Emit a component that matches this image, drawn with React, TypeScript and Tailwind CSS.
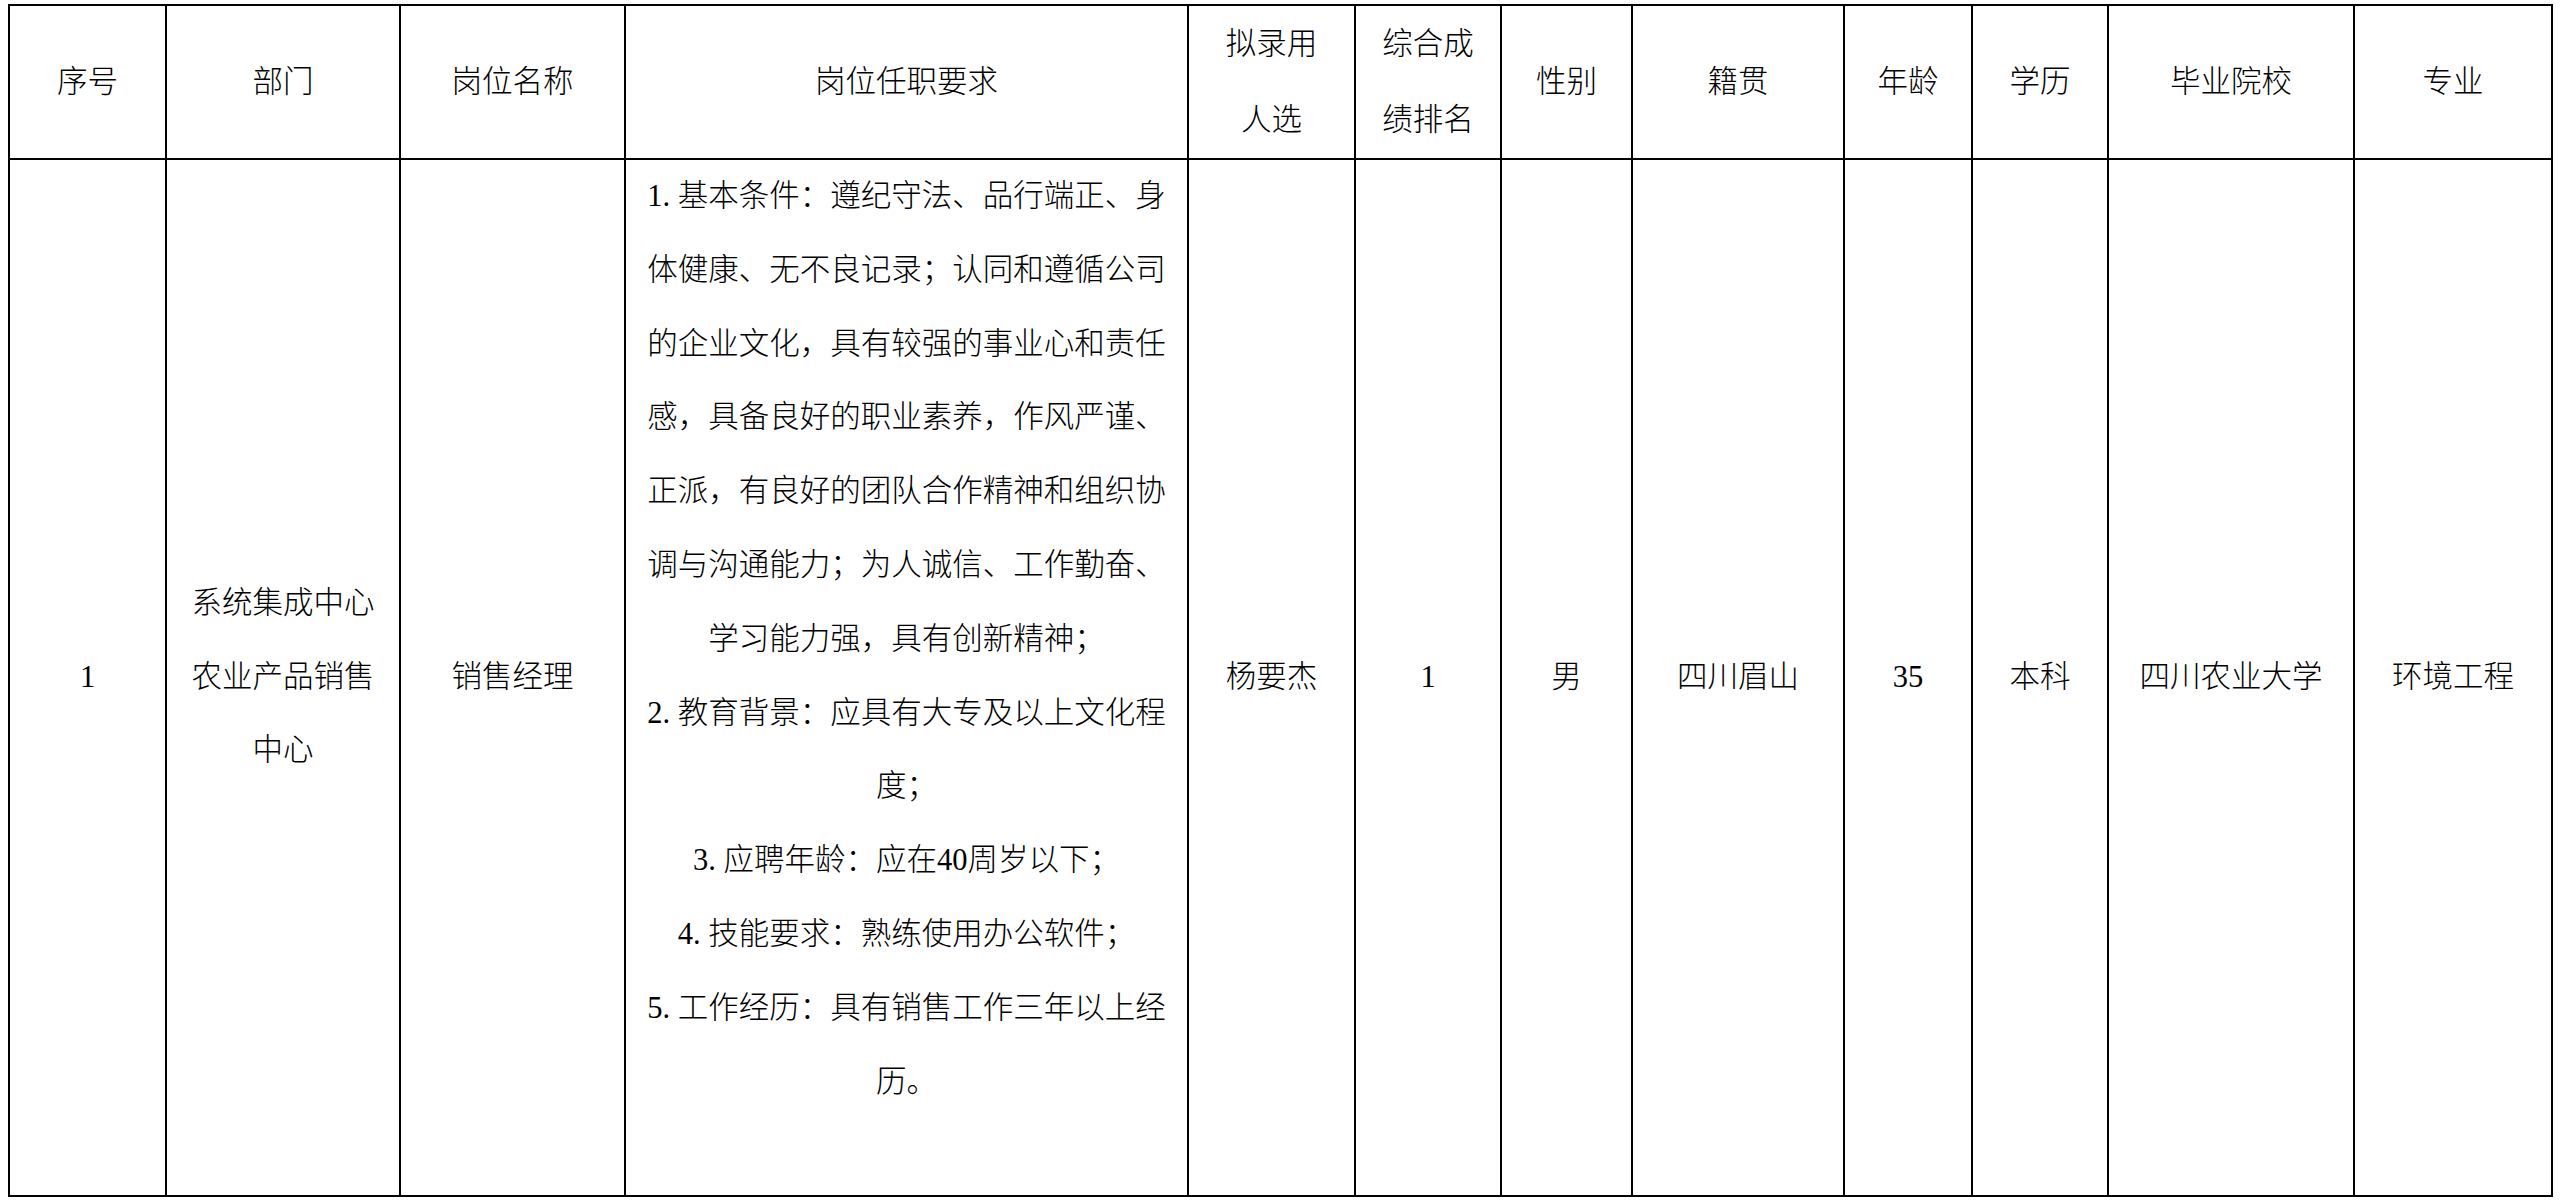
const headers: string[][] = [
  ['序号'],
  ['部门'],
  ['岗位名称'],
  ['岗位任职要求'],
  ['拟录用', '人选'],
  ['综合成', '绩排名'],
  ['性别'],
  ['籍贯'],
  ['年龄'],
  ['学历'],
  ['毕业院校'],
  ['专业'],
]

// Line breaks follow the source document so wrapping doesn't depend on font metrics
const requirements = [
  '1. 基本条件：遵纪守法、品行端正、身',
  '体健康、无不良记录；认同和遵循公司',
  '的企业文化，具有较强的事业心和责任',
  '感，具备良好的职业素养，作风严谨、',
  '正派，有良好的团队合作精神和组织协',
  '调与沟通能力；为人诚信、工作勤奋、',
  '学习能力强，具有创新精神；',
  '2. 教育背景：应具有大专及以上文化程',
  '度；',
  '3. 应聘年龄：应在40周岁以下；',
  '4. 技能要求：熟练使用办公软件；',
  '5. 工作经历：具有销售工作三年以上经',
  '历。',
]

const row: (string[] | 'req')[] = [
  ['1'],
  ['系统集成中心', '农业产品销售', '中心'],
  ['销售经理'],
  'req',
  ['杨要杰'],
  ['1'],
  ['男'],
  ['四川眉山'],
  ['35'],
  ['本科'],
  ['四川农业大学'],
  ['环境工程'],
]

function Lines({ lines }: { lines: string[] }) {
  return (
    <div className="flex flex-col items-center">
      {lines.map((l, i) => (
        <span key={i} className="whitespace-nowrap">
          {l}
        </span>
      ))}
    </div>
  )
}

export default function App() {
  return (
    <div className="min-h-screen bg-white pl-[8px] pt-[4px] text-black font-['Liberation_Serif','Noto_Sans_CJK_SC',serif] text-[30.5px] font-light">
      <div className="grid w-max grid-cols-[157px_234px_225px_563px_167px_146px_131px_212px_128px_136px_246px_198px] grid-rows-[154px_1037px] border-l-2 border-t-2 border-black">
        {/* Header */}
        {headers.map((h, i) => (
          <div
            key={`h${i}`}
            className="flex items-center justify-center border-r-2 border-b-2 border-black text-center leading-[76px]"
          >
            <Lines lines={h} />
          </div>
        ))}

        {/* Body */}
        {row.map((c, i) =>
          c === 'req' ? (
            <div
              key={`b${i}`}
              className="flex flex-col items-center border-r-2 border-b-2 border-black text-center leading-[73.8px]"
            >
              {requirements.map((l, j) => (
                <span key={j} className="whitespace-nowrap">
                  {l}
                </span>
              ))}
            </div>
          ) : (
            <div
              key={`b${i}`}
              className="flex items-center justify-center border-r-2 border-b-2 border-black text-center leading-[73.8px]"
            >
              <Lines lines={c} />
            </div>
          )
        )}
      </div>
    </div>
  )
}
